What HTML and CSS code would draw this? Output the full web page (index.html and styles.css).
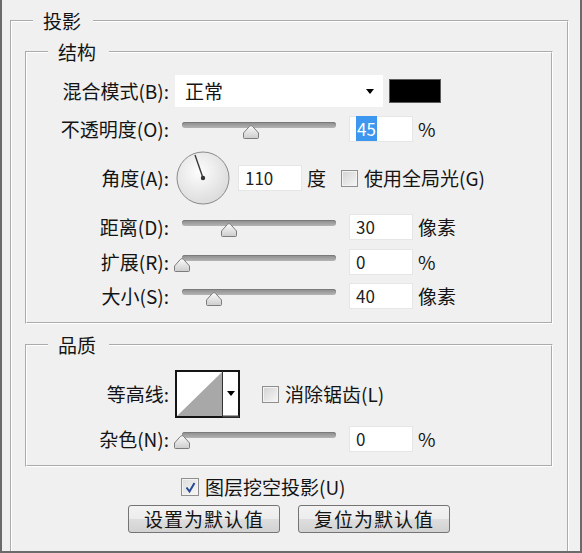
FILE: index.html
```html
<!DOCTYPE html>
<html lang="zh-CN">
<head>
    <meta charset="UTF-8" />
    <title>投影</title>
    <link rel="stylesheet" href="styles.css">
</head>
<body>

    <svg class="defs" width="0" height="0">
        <defs>
            <linearGradient id="thumbFill" x1="0" y1="0" x2="0" y2="1">
                <stop offset="0" stop-color="#fbfbfb"/>
                <stop offset="1" stop-color="#cdcdcd"/>
            </linearGradient>
            <symbol id="thumb" viewBox="0 0 18 15">
                <path d="M1.5 13.5 V9 L7.6 2.2 Q9 0.9 10.4 2.2 L16.5 9 V13.5 Q16.5 14.5 15.5 14.5 H2.5 Q1.5 14.5 1.5 13.5 Z" fill="url(#thumbFill)" stroke="#7c7c7c"/>
            </symbol>
        </defs>
    </svg>

    <div class="dialog">
        <fieldset class="group outer">
            <legend>投影</legend>

            <fieldset class="group inner struct">
                <legend>结构</legend>

                <div class="row">
                    <span class="lbl">混合模式(B):</span>
                    <div class="select"><span>正常</span><i class="caret"></i></div>
                    <div class="swatch"></div>
                </div>

                <div class="row">
                    <span class="lbl">不透明度(O):</span>
                    <div class="slider">
                        <div class="track"></div>
                        <svg class="thumb" style="left:69px"><use href="#thumb"/></svg>
                    </div>
                    <div class="field"><span class="sel">45</span></div>
                    <span class="unit">%</span>
                </div>

                <div class="row row-angle">
                    <span class="lbl">角度(A):</span>
                    <svg class="dial" width="54" height="54" viewBox="0 0 54 54">
                        <defs>
                            <radialGradient id="dialFill" cx="0.42" cy="0.38" r="0.7">
                                <stop offset="0" stop-color="#fdfdfd"/>
                                <stop offset="1" stop-color="#d8d8d8"/>
                            </radialGradient>
                        </defs>
                        <circle cx="27" cy="27" r="26" fill="url(#dialFill)" stroke="#8a8a8a"/>
                        <line x1="27" y1="27" x2="19" y2="4" stroke="#3a3a3a" stroke-width="1.4"/>
                        <circle cx="27" cy="27" r="2.2" fill="#333"/>
                    </svg>
                    <div class="field angle">110</div>
                    <span class="unit">度</span>
                    <span class="check global"></span>
                    <span class="check-text">使用全局光(G)</span>
                </div>

                <div class="row">
                    <span class="lbl">距离(D):</span>
                    <div class="slider">
                        <div class="track"></div>
                        <svg class="thumb" style="left:47px"><use href="#thumb"/></svg>
                    </div>
                    <div class="field">30</div>
                    <span class="unit">像素</span>
                </div>

                <div class="row">
                    <span class="lbl">扩展(R):</span>
                    <div class="slider">
                        <div class="track"></div>
                        <svg class="thumb" style="left:0px"><use href="#thumb"/></svg>
                    </div>
                    <div class="field">0</div>
                    <span class="unit">%</span>
                </div>

                <div class="row row-last">
                    <span class="lbl">大小(S):</span>
                    <div class="slider">
                        <div class="track"></div>
                        <svg class="thumb" style="left:32px"><use href="#thumb"/></svg>
                    </div>
                    <div class="field">40</div>
                    <span class="unit">像素</span>
                </div>
            </fieldset>

            <fieldset class="group inner quality">
                <legend>品质</legend>

                <div class="row">
                    <span class="lbl">等高线:</span>
                    <svg class="contour" width="65" height="48" viewBox="0 0 65 48">
                        <rect x="0" y="0" width="65" height="48" fill="#fff"/>
                        <path d="M2 46 L47 2 V46 Z" fill="#a8a8a8"/>
                        <rect x="1" y="1" width="63" height="46" fill="none" stroke="#151515" stroke-width="2"/>
                        <line x1="47.5" y1="1" x2="47.5" y2="47" stroke="#333"/>
                        <line x1="48" y1="46.5" x2="64" y2="46.5" stroke="#444" stroke-width="2"/>
                        <path d="M52 21 H60 L56 26 Z" fill="#000"/>
                    </svg>
                    <span class="check aa"></span>
                    <span class="check-text">消除锯齿(L)</span>
                </div>

                <div class="row">
                    <span class="lbl">杂色(N):</span>
                    <div class="slider">
                        <div class="track"></div>
                        <svg class="thumb" style="left:0px"><use href="#thumb"/></svg>
                    </div>
                    <div class="field">0</div>
                    <span class="unit">%</span>
                </div>
            </fieldset>

            <div class="knockout">
                <span class="check checked">
                    <svg width="17" height="17" viewBox="0 0 17 17"><path d="M4.5 8.5 L7.5 12.5 L12.5 4" fill="none" stroke="#27489a" stroke-width="2"/></svg>
                </span>
                <span class="check-text">图层挖空投影(U)</span>
            </div>

            <div class="buttons">
                <button type="button" class="btn">设置为默认值</button>
                <button type="button" class="btn">复位为默认值</button>
            </div>
        </fieldset>
    </div>

</body>
</html>
```

FILE: styles.css
```css
body {
    margin: 0;
    background: #f0f0f0;
    font-family: "Noto Sans CJK SC", sans-serif;
    font-size: 19px;
    line-height: 24px;
    color: #141414;
}
.defs {
    position: absolute;
}
.dialog {
    width: 582px;
    height: 553px;
    box-sizing: border-box;
    border: 2px solid #6b6b6b;
    border-top: none;
    padding-top: 10px;
    overflow: hidden;
    background: #f0f0f0;
}
.group {
    border: 2px groove #fff;
    margin: 0;
    min-width: 0;
}
.group legend {
    line-height: 22px;
}
.outer {
    margin-left: 8px;
    width: 559px;
    box-sizing: border-box;
    padding: 0 14px 60px 13px;
}
.outer > legend {
    margin-left: 8px;
    padding: 0 12px 0 10px;
}
.inner > legend {
    margin-left: 21px;
    padding: 0 13px 0 10px;
}
.struct {
    margin-top: 9px;
    padding: 12px 0 13px;
}
.quality {
    margin-top: 10px;
    padding: 14px 0 13px;
}
.row {
    display: flex;
    align-items: center;
}
.row + .row {
    margin-top: 9px;
}
.row.row-last {
    margin-top: 8px;
}
.quality .row + .row {
    margin-top: 8px;
}
.lbl {
    flex: none;
    width: 142px;
    text-align: right;
}
.select {
    margin-left: 6px;
    width: 208px;
    height: 32px;
    box-sizing: border-box;
    background: #fff;
    display: flex;
    align-items: center;
    padding-left: 10px;
}
.caret {
    margin-left: auto;
    margin-right: 9px;
    border-left: 4px solid transparent;
    border-right: 4px solid transparent;
    border-top: 5px solid #000;
}
.swatch {
    margin-left: 6px;
    width: 52px;
    height: 24px;
    box-sizing: border-box;
    background: #000;
    border: 1px solid #5c5c5c;
}
.slider {
    position: relative;
    margin-left: 4px;
    width: 168px;
    height: 26px;
    flex: none;
}
.track {
    margin: 6px 5px 0 9px;
    height: 6px;
    border-radius: 3px;
    background: linear-gradient(#8a8a8a, #b4b4b4);
    box-shadow: inset 0 1px 0 #7a7a7a;
}
.thumb {
    position: absolute;
    top: 8px;
    width: 18px;
    height: 15px;
}
.field {
    margin-left: 8px;
    width: 64px;
    height: 26px;
    box-sizing: border-box;
    background: #fff;
    border: 1px solid #e6e6e6;
    padding-left: 6px;
    font-size: 17px;
    line-height: 24px;
    color: #222;
}
.sel {
    background: #3d97ee;
    color: #fff;
    padding: 0 1px;
}
.unit {
    margin-left: 5px;
}
.dial {
    margin-left: 7px;
    flex: none;
}
.field.angle {
    margin-left: 8px;
}
.check {
    flex: none;
    width: 17px;
    height: 17px;
    box-sizing: border-box;
    border: 1px solid #8f8f8f;
    background: linear-gradient(135deg, #d2d2d2, #f7f7f7);
    box-shadow: inset 0 0 0 1px #f3f3f3;
}
.check.global {
    margin-left: 15px;
}
.check.aa {
    margin-left: 22px;
}
.check-text {
    margin-left: 6px;
}
.check.checked {
    width: 18px;
    height: 18px;
    background: linear-gradient(135deg, #dcdcdc, #f9f9f9);
}
.check.checked svg {
    display: block;
}
.contour {
    margin-left: 6px;
    flex: none;
}
.knockout {
    display: flex;
    align-items: center;
    margin: 10px 0 0 156px;
    height: 20px;
}
.buttons {
    display: flex;
    justify-content: center;
    gap: 18px;
    margin-top: 8px;
}
.btn {
    width: 152px;
    height: 28px;
    padding: 0;
    border: 1px solid #747474;
    border-radius: 3px;
    background: linear-gradient(#f3f3f3 0%, #ececec 50%, #dedede 50%, #d2d2d2 100%);
    font-family: inherit;
    font-size: 19px;
    line-height: 26px;
    color: #141414;
    letter-spacing: 1px;
}
```
